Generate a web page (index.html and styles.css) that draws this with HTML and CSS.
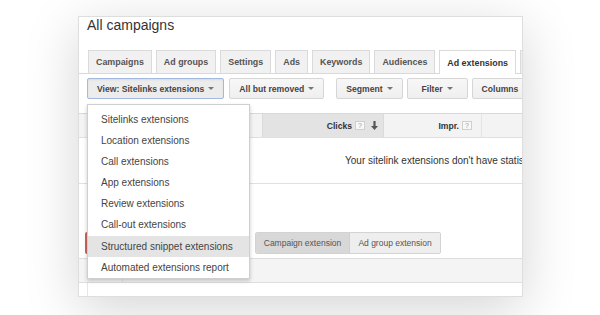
FILE: index.html
```html
<!DOCTYPE html>
<html>
<head>
<meta charset="utf-8">
<link rel="stylesheet" href="styles.css">
</head>
<body>
<div class="stage">
  <div class="card">
    <h1 class="title">All campaigns</h1>
    <div class="tabs">
      <div class="tab">Campaigns</div>
      <div class="tab">Ad groups</div>
      <div class="tab">Settings</div>
      <div class="tab">Ads</div>
      <div class="tab">Keywords</div>
      <div class="tab">Audiences</div>
      <div class="tab active">Ad extensions</div>
      <div class="tab">Dimensions</div>
    </div>
    <div class="toolbar">
      <div class="btn view">View: Sitelinks extensions <span class="caret"></span></div>
      <div class="btn">All but removed <span class="caret"></span></div>
      <div class="sep"></div>
      <div class="btn">Segment <span class="caret"></span></div>
      <div class="btn filter">Filter <span class="caret"></span></div>
      <div class="btn">Columns <span class="caret"></span></div>
    </div>
    <div class="table">
      <div class="thead">
        <div class="th first"></div>
        <div class="th sorted">Clicks <span class="q">?</span>
          <svg class="sort" width="7" height="9" viewBox="0 0 7 9"><path d="M2.4 0h2.2v5h2.4L3.5 9 0 5h2.4z" fill="#555"/></svg>
        </div>
        <div class="th impr">Impr. <span class="q">?</span></div>
        <div class="th rest"></div>
      </div>
      <div class="empty">Your sitelink extensions don't have statistics for the selected date range.</div>
    </div>
    <div class="actions">
      <div class="red-btn"></div>
      <div class="seg">
        <div class="seg-item on">Campaign extension</div>
        <div class="seg-item">Ad group extension</div>
      </div>
    </div>
    <div class="band"><div class="band-cell"></div></div>
    <div class="bottom"></div>

    <div class="menu">
      <div class="item">Sitelinks extensions</div>
      <div class="item">Location extensions</div>
      <div class="item">Call extensions</div>
      <div class="item">App extensions</div>
      <div class="item">Review extensions</div>
      <div class="item">Call-out extensions</div>
      <div class="item hover">Structured snippet extensions</div>
      <div class="item">Automated extensions report</div>
    </div>
  </div>
</div>
</body>
</html>
```

FILE: styles.css
```css
* { box-sizing: border-box; }
html, body { margin: 0; padding: 0; background: #fff; }
body {
  font-family: "Liberation Sans", Arial, sans-serif;
  width: 600px;
  height: 315px;
  overflow: hidden;
}
.stage { padding: 16px 0 0 78px; }
.card {
  position: relative;
  width: 445px;
  height: 281px;
  background: #fff;
  border: 1px solid #dedede;
  overflow: hidden;
  box-shadow: 0 12px 50px rgba(0, 0, 0, 0.17);
}
.title {
  margin: 0;
  padding: 0 0 0 8px;
  height: 33px;
  font-size: 14px;
  line-height: 17px;
  font-weight: normal;
  color: #333;
}
.tabs {
  display: flex;
  align-items: flex-end;
  gap: 4px;
  height: 24px;
  padding-left: 9px;
  border-bottom: 1px solid #d9d9d9;
}
.tab {
  flex-shrink: 0;
  height: 23px;
  padding: 0 7px;
  display: flex;
  align-items: center;
  border: 1px solid #dadada;
  border-bottom: none;
  background: #f1f1f1;
  font-size: 8.9px;
  font-weight: bold;
  color: #555;
  white-space: nowrap;
}
.tab.active {
  height: 24px;
  margin-bottom: -1px;
  background: #fff;
  color: #333;
}
.toolbar {
  display: flex;
  align-items: center;
  gap: 4px;
  height: 39px;
  padding: 0 0 10px 8px;
}
.btn {
  flex-shrink: 0;
  height: 21px;
  display: flex;
  align-items: center;
  justify-content: center;
  gap: 4px;
  padding: 0 9px;
  border: 1px solid #d6d6d6;
  border-radius: 2px;
  background: linear-gradient(#f7f7f7, #efefef);
  font-size: 8.6px;
  font-weight: bold;
  color: #444;
  white-space: nowrap;
}
.btn.view {
  margin-right: 1px;
  border-color: #a3b9df;
  background: #ececec;
  box-shadow: inset 0 1px 2px rgba(0, 0, 0, 0.08);
}
.btn.filter { min-width: 61px; }
.caret {
  width: 0;
  height: 0;
  border-left: 3px solid transparent;
  border-right: 3px solid transparent;
  border-top: 3px solid #777;
}
.sep {
  width: 1px;
  height: 21px;
  margin-left: 4px;
  background: #e2e2e2;
}
.table { border-top: 1px solid #d9d9d9; }
.thead {
  display: flex;
  height: 24px;
  border-bottom: 1px solid #e0e0e0;
}
.th {
  display: flex;
  align-items: center;
  justify-content: flex-end;
  gap: 3px;
  background: #f3f3f3;
  font-size: 8.6px;
  font-weight: bold;
  color: #333;
  white-space: nowrap;
}
.th.first { width: 183px; }
.th.sorted {
  width: 121px;
  padding-right: 5px;
  background: #e3e3e3;
  border-left: 1px solid #dadada;
}
.th.sorted .sort { margin-left: 3px; }
.th.impr {
  width: 98px;
  padding-right: 9px;
  border-left: 1px solid #dadada;
}
.th.rest { flex: 1; border-left: 1px solid #e4e4e4; }
.q {
  display: inline-flex;
  align-items: center;
  justify-content: center;
  width: 10px;
  height: 9px;
  border: 1px solid #cfcfcf;
  background: #f8f8f8;
  font-size: 7px;
  font-weight: normal;
  color: #9a9a9a;
}
.empty {
  height: 46px;
  display: flex;
  align-items: center;
  padding-left: 266px;
  border-bottom: 1px solid #e0e0e0;
  font-size: 10px;
  color: #333;
  white-space: nowrap;
}
.actions {
  display: flex;
  align-items: flex-start;
  height: 74px;
  padding: 48px 0 0 6px;
}
.red-btn {
  flex-shrink: 0;
  width: 155px;
  height: 22px;
  margin-right: 15px;
  background: #cd665e;
  border-radius: 2px;
}
.seg {
  display: flex;
  height: 22px;
  border: 1px solid #d3d3d3;
  border-radius: 2px;
  overflow: hidden;
}
.seg-item {
  display: flex;
  align-items: center;
  justify-content: center;
  width: 90px;
  background: #eeeeee;
  font-size: 8.5px;
  color: #555;
  white-space: nowrap;
}
.seg-item.on {
  width: 94px;
  background: #d8d8d8;
  border-right: 1px solid #d0d0d0;
}
.band {
  display: flex;
  height: 25px;
  background: #f4f4f4;
  border-top: 1px solid #dedede;
  border-bottom: 1px solid #dedede;
}
.band-cell { width: 44px; border-right: 1px solid #e4e4e4; }
.bottom {
  height: 13px;
  margin-left: 8px;
  border-left: 1px solid #e6e6e6;
}
.menu {
  position: absolute;
  left: 8px;
  top: 87px;
  width: 163px;
  padding-top: 4px;
  background: #fff;
  border: 1px solid #cfcfcf;
  box-shadow: 0 2px 4px rgba(0, 0, 0, 0.2);
}
.item {
  height: 21.1px;
  line-height: 21.1px;
  padding-left: 13px;
  font-size: 10px;
  color: #444;
  white-space: nowrap;
}
.item.hover { background: #e4e4e4; }
```
